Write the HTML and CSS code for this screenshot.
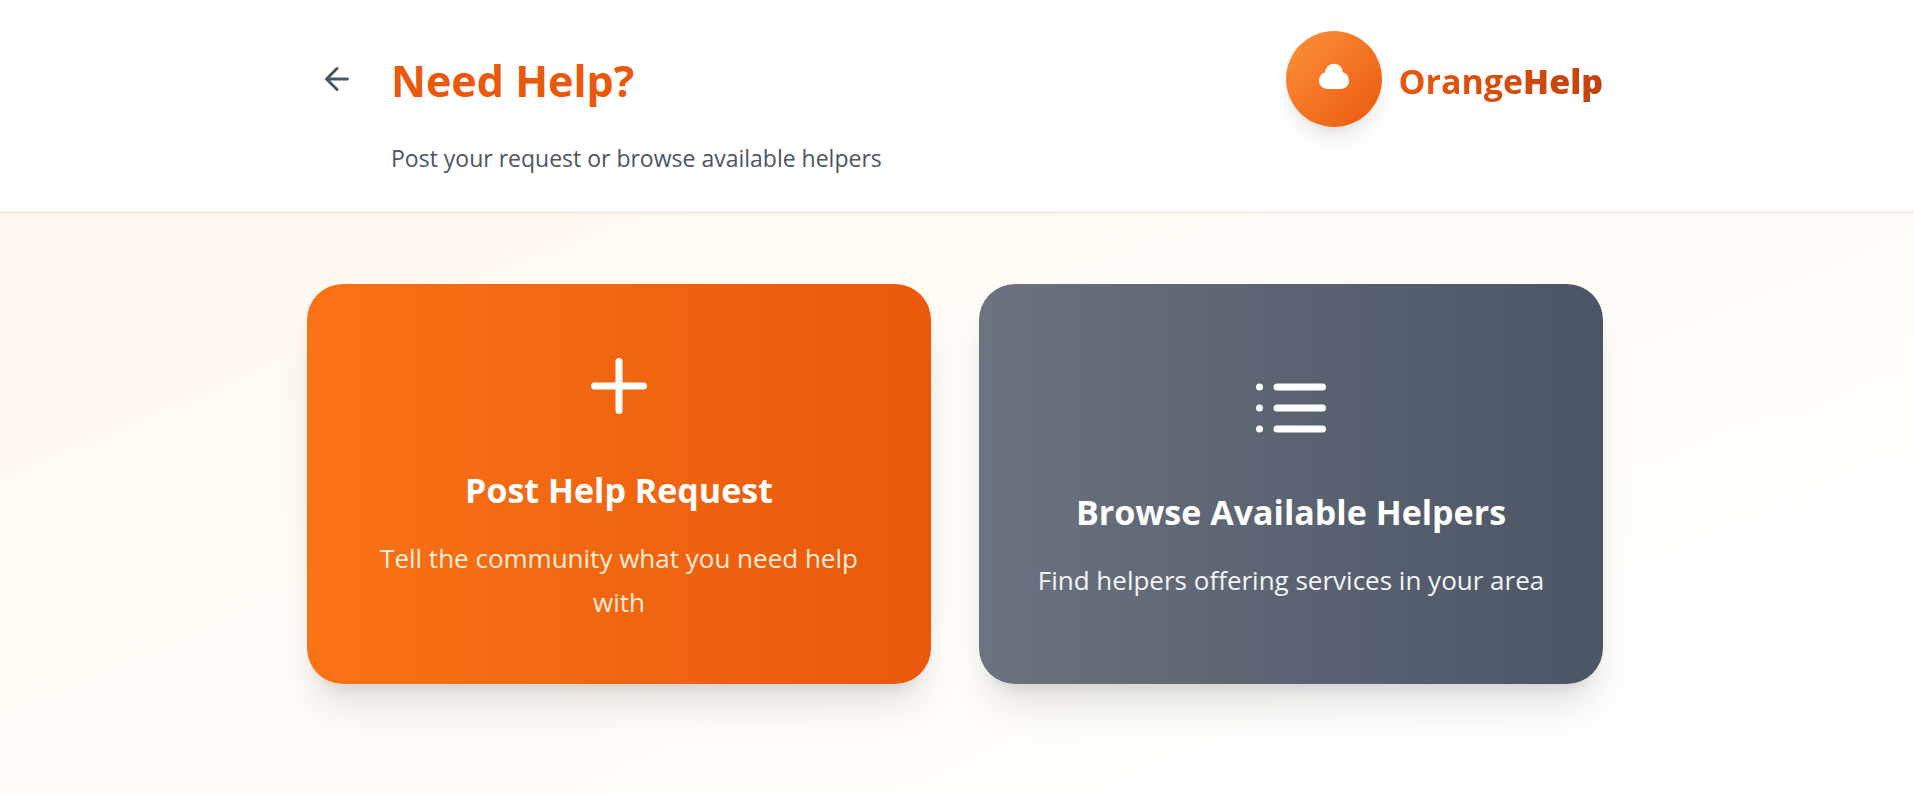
FILE: index.html
```html
<!DOCTYPE html>
<html lang="en">
<head>
  <meta charset="utf-8">
  <meta name="viewport" content="width=device-width, initial-scale=1">
  <title>Need Help? - OrangeHelp</title>
  <link rel="stylesheet" href="styles.css">
</head>
<body>
  <header class="header">
    <div class="container header-inner">
      <div class="heading">
        <div class="heading-row">
          <button class="back" type="button" aria-label="Back">
            <svg class="back-icon" viewBox="0 0 24 24" aria-hidden="true"><path d="M19 12H5M12 19l-7-7 7-7"/></svg>
          </button>
          <h1 class="title">Need Help?</h1>
        </div>
        <p class="subtitle">Post your request or browse available helpers</p>
      </div>
      <div class="brand">
        <span class="brand-mark">
          <svg class="brand-icon" viewBox="0 0 36 36" aria-hidden="true"><path d="M11.500 28C6.500 28 3 24.300 3 19.800C3 15.500 5.800 12 9.200 11.300C9.500 6.500 13 2.700 18 2.700C23 2.700 26.500 6.500 26.800 11.300C30.200 12 33 15.500 33 19.800C33 24.300 29.500 28 24.500 28Z"/></svg>
        </span>
        <span class="brand-name">Orange<span class="brand-strong">Help</span></span>
      </div>
    </div>
  </header>
  <main class="container cards">
    <button class="card card-primary" type="button">
      <svg class="card-icon" viewBox="0 0 24 24" aria-hidden="true"><path d="M12 5v14M5 12h14"/></svg>
      <span class="card-title">Post Help Request</span>
      <span class="card-text">Tell the community what you need help with</span>
    </button>
    <button class="card card-secondary" type="button">
      <svg class="card-icon" viewBox="0 0 24 24" aria-hidden="true"><path d="M8 6h13M8 12h13M8 18h13M3 6h.01M3 12h.01M3 18h.01"/></svg>
      <span class="card-title">Browse Available Helpers</span>
      <span class="card-text">Find helpers offering services in your area</span>
    </button>
  </main>
</body>
</html>
```

FILE: styles.css
```css
* {
  box-sizing: border-box;
}

body {
  margin: 0;
  min-height: 100vh;
  background: linear-gradient(to bottom right, #fff7ed, #ffffff);
  font-family: "Segoe UI", "Open Sans", sans-serif;
  color: #4b5563;
}

button {
  border: 0;
  font: inherit;
  cursor: pointer;
}

h1,
p {
  margin: 0;
}

svg {
  display: block;
  fill: none;
  stroke: currentColor;
  stroke-width: 2;
  stroke-linecap: round;
  stroke-linejoin: round;
}

.container {
  width: 100%;
  max-width: 1344px;
  margin: 0 auto;
  padding: 0 26px 0 22px;
}

.header {
  background: #ffffff;
  border-bottom: 1px solid #f9ede0;
  box-shadow: 0 2px 3px rgba(0, 0, 0, 0.05);
}

.header-inner {
  display: flex;
  align-items: flex-start;
  justify-content: space-between;
  padding-top: 31px;
  padding-bottom: 34px;
}

.heading-row {
  display: flex;
  align-items: center;
  gap: 24px;
  height: 96px;
}

.back {
  padding: 12px;
  border-radius: 50%;
  background: transparent;
  color: #4b5563;
}

.back-icon {
  width: 36px;
  height: 36px;
}

.title {
  padding-top: 4px;
  font-size: 43px;
  line-height: 54px;
  font-weight: 700;
  color: #ea580c;
}

.subtitle {
  margin-top: 13px;
  margin-bottom: 1px;
  padding-left: 84px;
  font-size: 23px;
  line-height: 36px;
}

.brand {
  display: flex;
  align-items: center;
  gap: 16px;
}

.brand-mark {
  display: grid;
  place-items: center;
  width: 96px;
  height: 96px;
  border-radius: 50%;
  background: linear-gradient(to bottom right, #fb923c, #ea580c);
  box-shadow: 0 15px 23px -5px rgba(0, 0, 0, 0.1), 0 6px 9px -6px rgba(0, 0, 0, 0.1);
  color: #ffffff;
}

.brand-icon {
  width: 36px;
  height: 36px;
  fill: currentColor;
  stroke: none;
}

.brand-name {
  padding-top: 4px;
  background: linear-gradient(to right, #ea580c, #c2410c);
  background-clip: text;
  -webkit-background-clip: text;
  color: transparent;
  font-size: 34px;
  line-height: 54px;
  font-weight: 700;
}

.brand-strong {
  font-weight: 800;
}

.cards {
  display: grid;
  grid-template-columns: repeat(2, minmax(0, 1fr));
  gap: 48px;
  padding-top: 72px;
  padding-bottom: 72px;
}

.card {
  display: flex;
  flex-direction: column;
  align-items: center;
  justify-content: center;
  padding: 60px 48px;
  border-radius: 36px;
  box-shadow: 0 30px 38px -8px rgba(0, 0, 0, 0.1), 0 12px 15px -9px rgba(0, 0, 0, 0.1);
  color: #ffffff;
  text-align: center;
}

.card-primary {
  background: linear-gradient(to right, #f97316, #ea580c);
}

.card-secondary {
  background: linear-gradient(to right, #6b7280, #4b5563);
}

.card-icon {
  width: 84px;
  height: 84px;
  margin-bottom: 38px;
}

.card-title {
  margin-bottom: 22px;
  font-size: 34px;
  line-height: 48px;
  font-weight: 700;
}

.card-text {
  font-size: 26px;
  line-height: 44px;
}

.card-primary .card-text {
  color: #ffedd5;
}

.card-secondary .card-text {
  color: #f3f4f6;
}
```
